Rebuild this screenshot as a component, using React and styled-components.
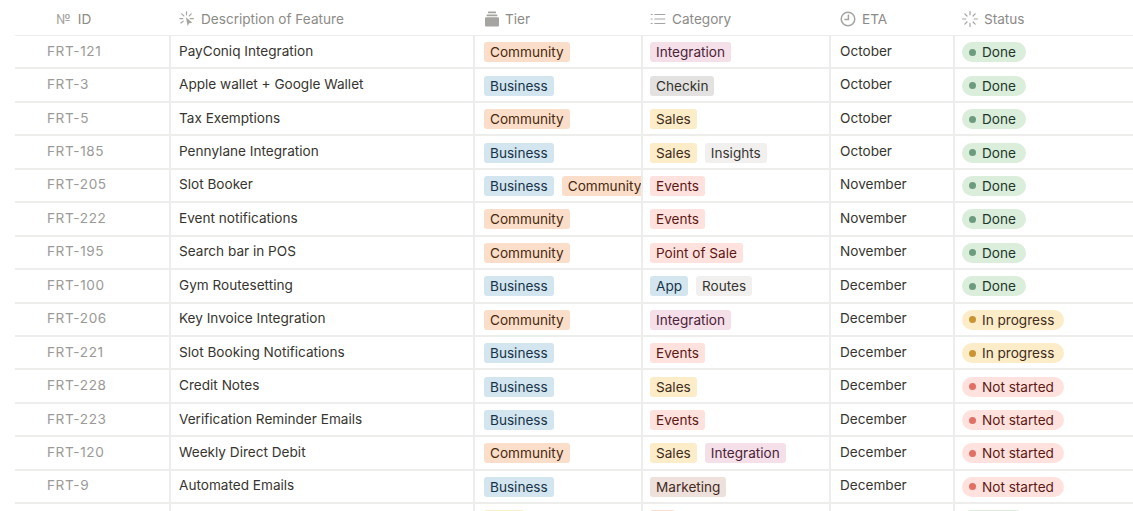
import React from "react";
import styled, { createGlobalStyle } from "styled-components";

const TONES = {
  orange: { bg: "#fadec9", fg: "#49290e" },
  blue: { bg: "#d3e5ef", fg: "#183347" },
  pink: { bg: "#f5e0e9", fg: "#4c2337" },
  grey: { bg: "#e3e2e0", fg: "#32302c" },
  light: { bg: "#f1f0ef", fg: "#373530" },
  yellow: { bg: "#fdecc8", fg: "#402c1b" },
  red: { bg: "#ffe2dd", fg: "#5d1715" },
  brown: { bg: "#eee0da", fg: "#442a1e" },
};

const STATUS = {
  done: { label: "Done", bg: "#dbeddb", fg: "#1c3829", dot: "#6c9b7d" },
  progress: { label: "In progress", bg: "#fdecc8", fg: "#402c1b", dot: "#cb9433" },
  todo: { label: "Not started", bg: "#ffe2dd", fg: "#5d1715", dot: "#e16f64" },
};

const CATEGORY_TONE = {
  Integration: "pink",
  Checkin: "grey",
  Sales: "yellow",
  Insights: "light",
  Events: "red",
  "Point of Sale": "red",
  App: "blue",
  Routes: "light",
  Marketing: "brown",
};

const TIER_TONE = { Community: "orange", Business: "blue" };

const rows = [
  ["FRT-121", "PayConiq Integration", ["Community"], ["Integration"], "October", "done"],
  ["FRT-3", "Apple wallet + Google Wallet", ["Business"], ["Checkin"], "October", "done"],
  ["FRT-5", "Tax Exemptions", ["Community"], ["Sales"], "October", "done"],
  ["FRT-185", "Pennylane Integration", ["Business"], ["Sales", "Insights"], "October", "done"],
  ["FRT-205", "Slot Booker", ["Business", "Community"], ["Events"], "November", "done"],
  ["FRT-222", "Event notifications", ["Community"], ["Events"], "November", "done"],
  ["FRT-195", "Search bar in POS", ["Community"], ["Point of Sale"], "November", "done"],
  ["FRT-100", "Gym Routesetting", ["Business"], ["App", "Routes"], "December", "done"],
  ["FRT-206", "Key Invoice Integration", ["Community"], ["Integration"], "December", "progress"],
  ["FRT-221", "Slot Booking Notifications", ["Business"], ["Events"], "December", "progress"],
  ["FRT-228", "Credit Notes", ["Business"], ["Sales"], "December", "todo"],
  ["FRT-223", "Verification Reminder Emails", ["Business"], ["Events"], "December", "todo"],
  ["FRT-120", "Weekly Direct Debit", ["Community"], ["Sales", "Integration"], "December", "todo"],
  ["FRT-9", "Automated Emails", ["Business"], ["Marketing"], "December", "todo"],
];

const COLUMNS = "154px 304px 168px 188px 124px 180px";

const GlobalStyle = createGlobalStyle`
  html, body {
    margin: 0;
    background: #fff;
  }
`;

const Table = styled.div`
  height: 511px;
  overflow: hidden;
  padding-left: 15px;
  font-family: Inter, "Liberation Sans", sans-serif;
  font-size: 13.6px;
  color: #37352f;
`;

const HeaderRow = styled.div`
  display: grid;
  grid-template-columns: ${COLUMNS};
  height: 36px;
  box-sizing: border-box;
  border-bottom: 1px solid #ededec;
`;

const HeaderCell = styled.div`
  display: flex;
  align-items: center;
  gap: ${(p) => p.$gap || 6}px;
  padding-left: ${(p) => p.$pad || 9}px;
  padding-top: 3px;
  color: #8c8b87;
`;

const Row = styled.div`
  display: grid;
  grid-template-columns: ${COLUMNS};
  height: 33.45px;
  box-sizing: border-box;
  border-bottom: 2px solid #ededec;
`;

const Cell = styled.div`
  display: flex;
  align-items: center;
  min-width: 0;
  overflow: hidden;
  white-space: nowrap;
  padding-left: ${(p) => p.$pad || 8}px;
  padding-bottom: 2px;
  box-sizing: border-box;
  & + & {
    border-left: 2px solid #ededec;
  }
`;

const IdCell = styled(Cell)`
  color: #9b9a97;
  letter-spacing: 0.6px;
`;

const TagCell = styled(Cell)`
  gap: 8px;
  padding-bottom: 0;
  padding-top: 1px;
`;

const Tag = styled.span`
  flex: none;
  height: 20px;
  line-height: 20px;
  padding: 0 6px;
  border-radius: 3px;
  background: ${(p) => p.$bg};
  color: ${(p) => p.$fg};
`;

const BlankTag = styled(Tag)`
  box-sizing: border-box;
  width: ${(p) => p.$width}px;
  border-radius: ${(p) => p.$radius || 3}px;
`;

const StatusPill = styled.span`
  display: inline-flex;
  align-items: center;
  gap: 6px;
  height: 20px;
  padding: 0 10px 0 7px;
  border-radius: 10px;
  background: ${(p) => p.$bg};
  color: ${(p) => p.$fg};
`;

const Dot = styled.span`
  width: 7px;
  height: 7px;
  border-radius: 50%;
  background: ${(p) => p.$color};
`;

const NumberMark = styled.span`
  font-size: 13.6px;
  color: #a5a4a1;
`;

const Icon = styled.svg`
  flex: none;
  width: 16px;
  height: 16px;
`;

const SparkIcon = () => (
  <Icon viewBox="0 0 16 16" fill="none" stroke="#a5a4a1" strokeWidth="1.2" strokeLinecap="round">
    <path d="M7.5 .8v3M2.7 2.8l2.1 2.1M12.3 2.8l-2.1 2.1M.8 7.6h3M1.9 12l2.4-1.9M11.2 7.6h3.2" />
    <path d="M7 6.3l1.6 9 1.4-3 3.4-.6z" fill="#a5a4a1" stroke="none" />
  </Icon>
);

const TierIcon = () => (
  <Icon viewBox="0 0 16 16" fill="#a5a4a1">
    <rect x="4" y="0.6" width="8" height="1.6" rx=".5" />
    <rect x="2.6" y="3.4" width="10.8" height="1.8" rx=".5" />
    <rect x="1" y="6.2" width="14" height="9.2" rx="1" />
  </Icon>
);

const ListIcon = () => (
  <Icon viewBox="0 0 16 16" fill="none" stroke="#a5a4a1" strokeWidth="1.2" strokeLinecap="round">
    <path d="M1.2 3.5h1M1.2 8h1M1.2 12.5h1M4.8 3.5h10M4.8 8h10M4.8 12.5h10" />
  </Icon>
);

const ClockIcon = () => (
  <Icon viewBox="0 0 16 16" fill="none" stroke="#a5a4a1" strokeWidth="1.5">
    <circle cx="8" cy="8" r="6.8" />
    <path d="M8.4 3.6V8.6H4.4" strokeWidth="1.5" />
  </Icon>
);

const LoaderIcon = () => (
  <Icon viewBox="0 0 16 16" fill="none" stroke="#a5a4a1" strokeWidth="1.2" strokeLinecap="round">
    <path d="M8 .6v3.2M8 12.4v3M.6 8H3.8M12.2 8h3.2M2.8 2.8l2.2 2.2M11 11l2.2 2.2M13.2 2.8L11 5M5 11l-2.2 2.2" />
  </Icon>
);

function Tags({ items, toneOf, pad }) {
  return (
    <TagCell $pad={pad}>
      {items.map((name) => {
        const tone = TONES[toneOf[name]];
        return (
          <Tag key={name} $bg={tone.bg} $fg={tone.fg}>
            {name}
          </Tag>
        );
      })}
    </TagCell>
  );
}

function StatusTag({ status }) {
  const s = STATUS[status];
  return (
    <StatusPill $bg={s.bg} $fg={s.fg}>
      <Dot $color={s.dot} />
      {s.label}
    </StatusPill>
  );
}

export default function App() {
  return (
    <>
      <GlobalStyle />
      <Table>
        <HeaderRow>
          <HeaderCell $pad={41} $gap={7}>
            <NumberMark>№</NumberMark>
            ID
          </HeaderCell>
          <HeaderCell $pad={10}>
            <SparkIcon />
            Description of Feature
          </HeaderCell>
          <HeaderCell $pad={11} $gap={5}>
            <TierIcon />
            Tier
          </HeaderCell>
          <HeaderCell $pad={9}>
            <ListIcon />
            Category
          </HeaderCell>
          <HeaderCell $pad={11}>
            <ClockIcon />
            ETA
          </HeaderCell>
          <HeaderCell $pad={9}>
            <LoaderIcon />
            Status
          </HeaderCell>
        </HeaderRow>
        {rows.map(([id, title, tiers, cats, eta, status]) => (
          <Row key={id}>
            <IdCell $pad={32}>{id}</IdCell>
            <Cell>{title}</Cell>
            <Tags items={tiers} toneOf={TIER_TONE} pad={9} />
            <Tags items={cats} toneOf={CATEGORY_TONE} pad={7} />
            <Cell $pad={9}>{eta}</Cell>
            <TagCell $pad={7}>
              <StatusTag status={status} />
            </TagCell>
          </Row>
        ))}
        {/* next row is cut by the window, only the tops of its pills show */}
        <Row>
          <IdCell $pad={32} />
          <Cell />
          <TagCell $pad={9}>
            <BlankTag $bg={TONES.yellow.bg} $width={40} />
          </TagCell>
          <TagCell $pad={7}>
            <BlankTag $bg={TONES.orange.bg} $width={25} />
          </TagCell>
          <Cell $pad={9} />
          <TagCell $pad={7}>
            <BlankTag $bg={STATUS.done.bg} $width={63} $radius={10} />
          </TagCell>
        </Row>
      </Table>
    </>
  );
}
